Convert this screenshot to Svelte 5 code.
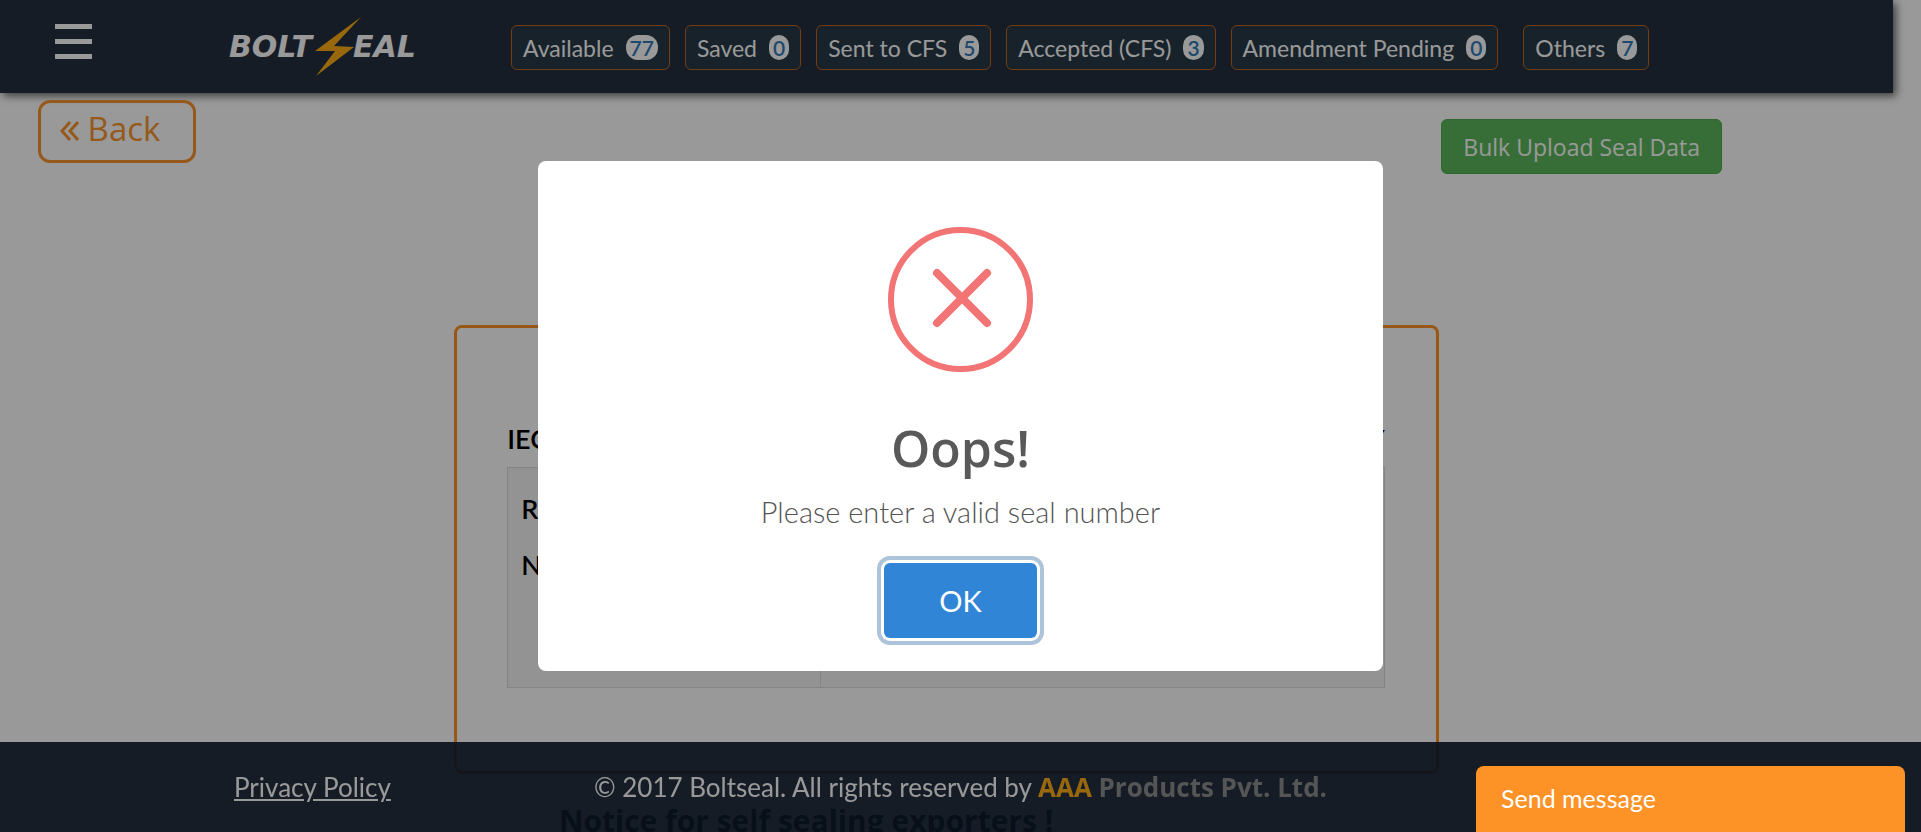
<script>
  const tabs = [
    { label: 'Available', count: 77 },
    { label: 'Saved', count: 0 },
    { label: 'Sent to CFS', count: 5 },
    { label: 'Accepted (CFS)', count: 3 },
    { label: 'Amendment Pending', count: 0 },
    { label: 'Others', count: 7, apart: true }
  ];
</script>

<div class="page">
  <header>
    <button class="menu" aria-label="Menu"><span></span><span></span><span></span></button>
    <a class="logo" href="#home" aria-label="Boltseal">
      <svg width="200" height="62" viewBox="0 0 200 62">
        <text x="0" y="41">BOLT</text>
        <text x="124" y="41">EAL</text>
        <path d="M132 1 L86 35 L106 35 L87 60 L125 31 L105 30 Z" />
      </svg>
    </a>
    <nav>
      {#each tabs as tab}
        <a href="#tab" class="tab" class:apart={tab.apart}>{tab.label}<span class="badge">{tab.count}</span></a>
      {/each}
    </nav>
  </header>

  <main>
    <div class="actions">
      <button class="back">
        <svg width="19" height="20" viewBox="0 0 19 20"><path d="M10 1 L2 10 L10 19 M18 1 L10 10 L18 19" /></svg>
        Back
      </button>
      <button class="bulk">Bulk Upload Seal Data</button>
    </div>

    <section class="panel">
      <div class="caption"><span>IEC</span><span>Y</span></div>
      <div class="grid">
        <div class="cell"><p>R</p><p>N</p></div>
        <div class="cell"></div>
      </div>
    </section>

    <h2 class="notice">Notice for self sealing exporters !</h2>
  </main>

  <footer>
    <a href="#privacy">Privacy Policy</a>
    <p>© 2017 Boltseal. All rights reserved by <b class="brand">AAA</b> <b class="company">Products Pvt. Ltd.</b></p>
  </footer>
</div>

<div class="overlay">
  <div class="modal" role="alertdialog" aria-labelledby="title" aria-describedby="message">
    <svg class="icon" width="145" height="145" viewBox="0 0 145 145">
      <circle cx="72.5" cy="72.5" r="69.5" stroke-width="6" />
      <path d="M49 46 L99 96 M99 46 L49 96" stroke-width="8" stroke-linecap="round" />
    </svg>
    <h1 id="title">Oops!</h1>
    <p id="message">Please enter a valid seal number</p>
    <button class="ok">OK</button>
  </div>
</div>

<button class="chat">Send message</button>

<style>
  :global(body) {
    margin: 0;
    background: #fff;
  }
  * {
    box-sizing: border-box;
  }
  button {
    font-family: inherit;
    cursor: pointer;
  }
  .page,
  .overlay,
  .chat {
    font-family: Lato, sans-serif;
  }
  .page {
    height: 100vh;
    overflow: hidden;
  }
  header {
    display: flex;
    align-items: center;
    width: calc(100% - 28px);
    height: 93px;
    padding-left: 55px;
    background: #253040;
    box-shadow: 3px 3px 8px rgba(0, 0, 0, 0.6);
  }
  .menu {
    display: flex;
    flex-direction: column;
    gap: 10px;
    width: 37px;
    margin: 0 137px 10px 0;
    padding: 0;
    border: 0;
    background: none;
  }
  .menu span {
    height: 5px;
    background: #fff;
  }
  .logo {
    display: flex;
    width: 282px;
  }
  .logo text {
    font: italic bold 30px 'DejaVu Sans', sans-serif;
    fill: #fff;
  }
  .logo path {
    fill: #ffae17;
  }
  nav {
    display: flex;
    gap: 15px;
    margin-top: 2px;
  }
  .tab {
    display: flex;
    align-items: center;
    gap: 12px;
    height: 45px;
    padding: 0 11px;
    border: 1px solid #c46418;
    border-radius: 6px;
    background: #283a48;
    color: #fff;
    font-size: 23px;
    white-space: nowrap;
    text-decoration: none;
  }
  .tab.apart {
    margin-left: 10px;
  }
  .badge {
    padding: 0 4px;
    border-radius: 12px;
    background: #fff;
    color: #337ab7;
    font-size: 21px;
    font-weight: 600;
    line-height: 25px;
  }
  main {
    width: calc(100% - 28px);
  }
  .actions {
    display: flex;
    justify-content: space-between;
    align-items: flex-start;
    padding: 7px 171px 0 38px;
  }
  .back {
    width: 158px;
    height: 63px;
    padding: 0 0 5px 19px;
    border: 3px solid #fa9530;
    border-radius: 12px;
    background: none;
    color: #fa9530;
    font-family: 'Open Sans', sans-serif;
    font-size: 33px;
    line-height: 40px;
    text-align: left;
  }
  .back path {
    fill: none;
    stroke: #fa9530;
    stroke-width: 3;
  }
  .bulk {
    height: 55px;
    margin-top: 19px;
    padding: 0 21px;
    border: 1px solid #4cae4c;
    border-radius: 6px;
    background: #5cb85c;
    color: #fff;
    font-family: 'Open Sans', sans-serif;
    font-size: 23px;
  }
  .panel {
    width: 52%;
    height: 449px;
    margin: 151px auto 0;
    padding: 95px 51px 0 50px;
    border: 3px solid #ff9224;
    border-radius: 8px;
    color: #000;
    font-size: 27px;
    font-weight: 600;
    line-height: 32px;
  }
  .caption {
    display: flex;
    justify-content: space-between;
    margin-bottom: 12px;
  }
  .grid {
    display: grid;
    grid-template-columns: 312px 1fr;
    height: 221px;
    border: 1px solid #dcdcdc;
    background: #f5f5f5;
  }
  .cell {
    padding: 25px 13px;
  }
  .cell + .cell {
    border-left: 1px solid #dcdcdc;
  }
  .cell p {
    margin: 0 0 24px;
  }
  .notice {
    margin: 26px 0 0 559px;
    color: #000;
    font: bold 30px/42px 'Open Sans', sans-serif;
  }
  footer {
    position: fixed;
    inset: auto 0 0;
    display: grid;
    grid-template-columns: 1fr auto 1fr;
    height: 90px;
    padding-top: 29px;
    background: rgba(14, 28, 45, 0.91);
    color: #fff;
    font-size: 26px;
    line-height: 32px;
  }
  footer a {
    padding-left: 234px;
    color: #fff;
  }
  footer p {
    margin: 0;
  }
  footer b {
    font-family: 'Open Sans', sans-serif;
  }
  .brand {
    color: #ffae17;
  }
  .company {
    color: #8e8e8e;
  }
  .overlay {
    position: fixed;
    inset: 0;
    display: flex;
    align-items: center;
    justify-content: center;
    background: rgba(0, 0, 0, 0.4);
  }
  .modal {
    display: flex;
    flex-direction: column;
    align-items: center;
    width: 44%;
    padding: 66px 30px 33px;
    border-radius: 8px;
    background: #fff;
  }
  .icon {
    fill: none;
    stroke: #f27474;
  }
  h1 {
    margin: 42px 0 0;
    color: #595959;
    font: 600 50px/68px 'Open Sans', sans-serif;
  }
  .modal p {
    margin: 12px 0 33px;
    color: #545454;
    font-size: 29px;
    font-weight: 300;
    line-height: 36px;
  }
  .ok {
    width: 153px;
    height: 75px;
    border: 0;
    border-radius: 6px;
    background: #3085d6;
    box-shadow: 0 0 0 3px #fff, 0 0 0 7px #adc3d9;
    color: #fff;
    font-size: 29px;
  }
  .chat {
    position: fixed;
    right: 16px;
    bottom: 0;
    width: 429px;
    height: 66px;
    padding: 0 25px 2px;
    border: 0;
    border-radius: 8px 8px 0 0;
    background: #fd9226;
    color: #fff;
    font-size: 25px;
    text-align: left;
  }
</style>
